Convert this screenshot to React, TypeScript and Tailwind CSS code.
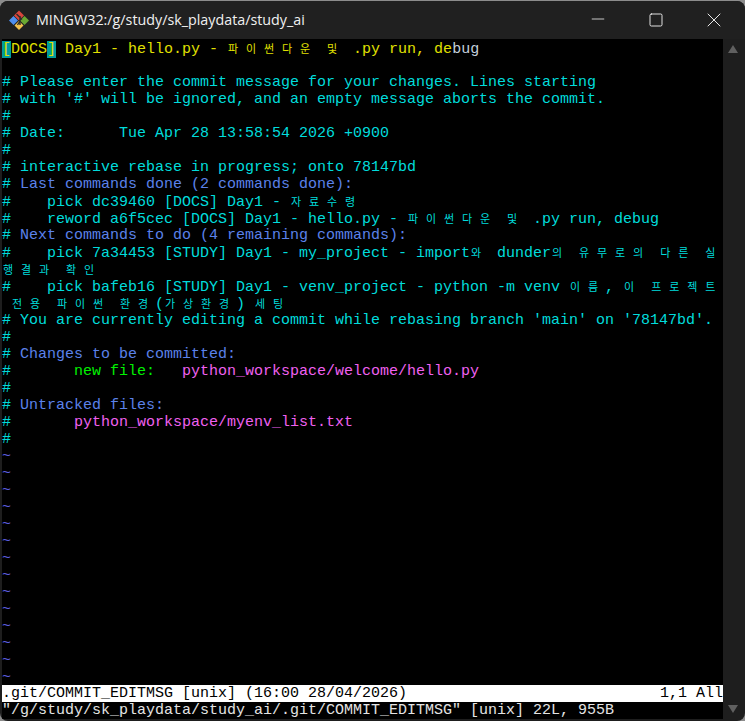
import { Minus, Square, X } from "lucide-react"

const cyan = "text-[#00dcdc]"
const blue = "text-[#5b82ea]"
const green = "text-[#00f000]"
const pink = "text-[#f060f0]"
const yellow = "text-[#e0e000]"

type Seg = [string, string]

// vim column grid: hangul takes two cells, everything else one
function Cells({ text, color }: { text: string; color: string }) {
  const parts = text.split(/([\uAC00-\uD7A3])/).filter(Boolean)
  return (
    <span className={color}>
      {parts.map((p, i) =>
        /[\uAC00-\uD7A3]/.test(p) ? (
          <span key={i} className="inline-block w-[18px] pl-px text-[11px] font-['Noto_Sans_CJK_KR',sans-serif]">
            {p}
          </span>
        ) : (
          <span key={i}>{p}</span>
        ),
      )}
    </span>
  )
}

function Row({ segs }: { segs: Seg[] }) {
  return (
    <div className="h-[17px] whitespace-pre leading-[19px]">
      {segs.map(([text, color], i) => (
        <Cells key={i} text={text} color={color} />
      ))}
    </div>
  )
}

const rows: Seg[][] = [
  [],
  [["# Please enter the commit message for your changes. Lines starting", cyan]],
  [["# with '#' will be ignored, and an empty message aborts the commit.", cyan]],
  [["#", cyan]],
  [["# Date:      Tue Apr 28 13:58:54 2026 +0900", cyan]],
  [["#", cyan]],
  [["# interactive rebase in progress; onto 78147bd", cyan]],
  [["# ", cyan], ["Last commands done (2 commands done):", blue]],
  [["#    pick dc39460 [DOCS] Day1 - 자료수령", cyan]],
  [["#    reword a6f5cec [DOCS] Day1 - hello.py - 파이썬다운 및 .py run, debug", cyan]],
  [["# ", cyan], ["Next commands to do (4 remaining commands):", blue]],
  [["#    pick 7a34453 [STUDY] Day1 - my_project - import와 dunder의 유무로의 다른 실", cyan]],
  [["행결과 확인", cyan]],
  [["#    pick bafeb16 [STUDY] Day1 - venv_project - python -m venv 이름, 이 프로젝트", cyan]],
  [[" 전용 파이썬 환경(가상환경) 세팅", cyan]],
  [["# You are currently editing a commit while rebasing branch 'main' on '78147bd'.", cyan]],
  [["#", cyan]],
  [["# ", cyan], ["Changes to be committed:", blue]],
  [["#", cyan], ["       new file:", green], ["   ", cyan], ["python_workspace/welcome/hello.py", pink]],
  [["#", cyan]],
  [["# ", cyan], ["Untracked files:", blue]],
  [["#", cyan], ["       ", cyan], ["python_workspace/myenv_list.txt", pink]],
  [["#", cyan]],
]

const tildes = Array.from({ length: 14 })

function GitIcon() {
  return (
    <svg width="22" height="22" viewBox="0 0 22 22">
      <path d="M11 1.5 16 6.5 11 11.5 6 6.5Z" fill="#d8453c" />
      <path d="M5.5 7 10 11.5 5.5 16 1 11.5Z" fill="#4f8fef" />
      <path d="M16.5 7 21 11.5 16.5 16 12 11.5Z" fill="#6aa832" />
      <path d="M11 12 15.5 16.5 11 21 6.500 16.500Z" fill="#f2c14e" />
      <path d="M8.500 5 14 10.500M12 7 12 16M12 12 9.500 16" stroke="#2b2b2b" strokeWidth="1.400" fill="none" />
    </svg>
  )
}

export default function App() {
  return (
    <div className="h-[721px] w-[745px] overflow-hidden bg-[#8c8c8c] pt-px">
      <div className="flex h-[720px] flex-col overflow-hidden rounded-[8px] bg-[#1e1e1e] text-white">
        {/* Title bar */}
        <div className="flex h-[38px] shrink-0 items-center bg-[#202020] pl-[8px]">
          <GitIcon />
          <span className="ml-[6px] font-['Open_Sans',sans-serif] text-[14.300px] text-[#f0f0f0]">
            MINGW32:/g/study/sk_playdata/study_ai
          </span>
          <div className="ml-auto flex items-center pr-[2px]">
            <div className="mb-[2px] flex w-[58px] justify-center">
              <Minus size={20} strokeWidth={0.9} />
            </div>
            <div className="flex w-[58px] justify-center">
              <Square size={16} strokeWidth={1.300} />
            </div>
            <div className="flex w-[58px] justify-center">
              <X size={24} strokeWidth={0.9} />
            </div>
          </div>
        </div>

        <div className="flex min-h-0 flex-1">
          {/* Terminal */}
          <div className="ml-[2px] mb-[2px] w-[721px] bg-black font-['Liberation_Mono',monospace] text-[15px]">
            <div className="h-[17px] whitespace-pre leading-[19px]">
              <span className={`bg-[#009c9c] ${yellow}`}>[</span>
              <span className={yellow}>DOCS</span>
              <span className={`bg-[#009c9c] ${yellow}`}>]</span>
              <Cells text=" Day1 - hello.py - 파이썬다운 및 .py run, de" color={yellow} />
              <span className="text-[#c4d0dc]">bug</span>
            </div>
            {rows.map((segs, i) => (
              <Row key={i} segs={segs} />
            ))}
            {tildes.map((_, i) => (
              <Row key={i} segs={[["~", "text-[#5f5fe0]"]]} />
            ))}
            <div className="flex h-[17px] justify-between whitespace-pre bg-white leading-[18px] text-black">
              <span>.git/COMMIT_EDITMSG [unix] (16:00 28/04/2026)</span>
              <span>1,1 All</span>
            </div>
            <div className="h-[17px] whitespace-pre leading-[18px] text-[#e4e4e4]">
              "/g/study/sk_playdata/study_ai/.git/COMMIT_EDITMSG" [unix] 22L, 955B
            </div>
          </div>

          {/* Scrollbar */}
          <div className="flex flex-1 flex-col items-center justify-between pb-[8px] pt-[6px] pr-[2px]">
            <div className="h-0 w-0 border-x-[5px] border-b-[8px] border-x-transparent border-b-[#606060]" />
            <div className="h-0 w-0 border-x-[5px] border-t-[8px] border-x-transparent border-t-[#606060]" />
          </div>
        </div>
      </div>
    </div>
  )
}
